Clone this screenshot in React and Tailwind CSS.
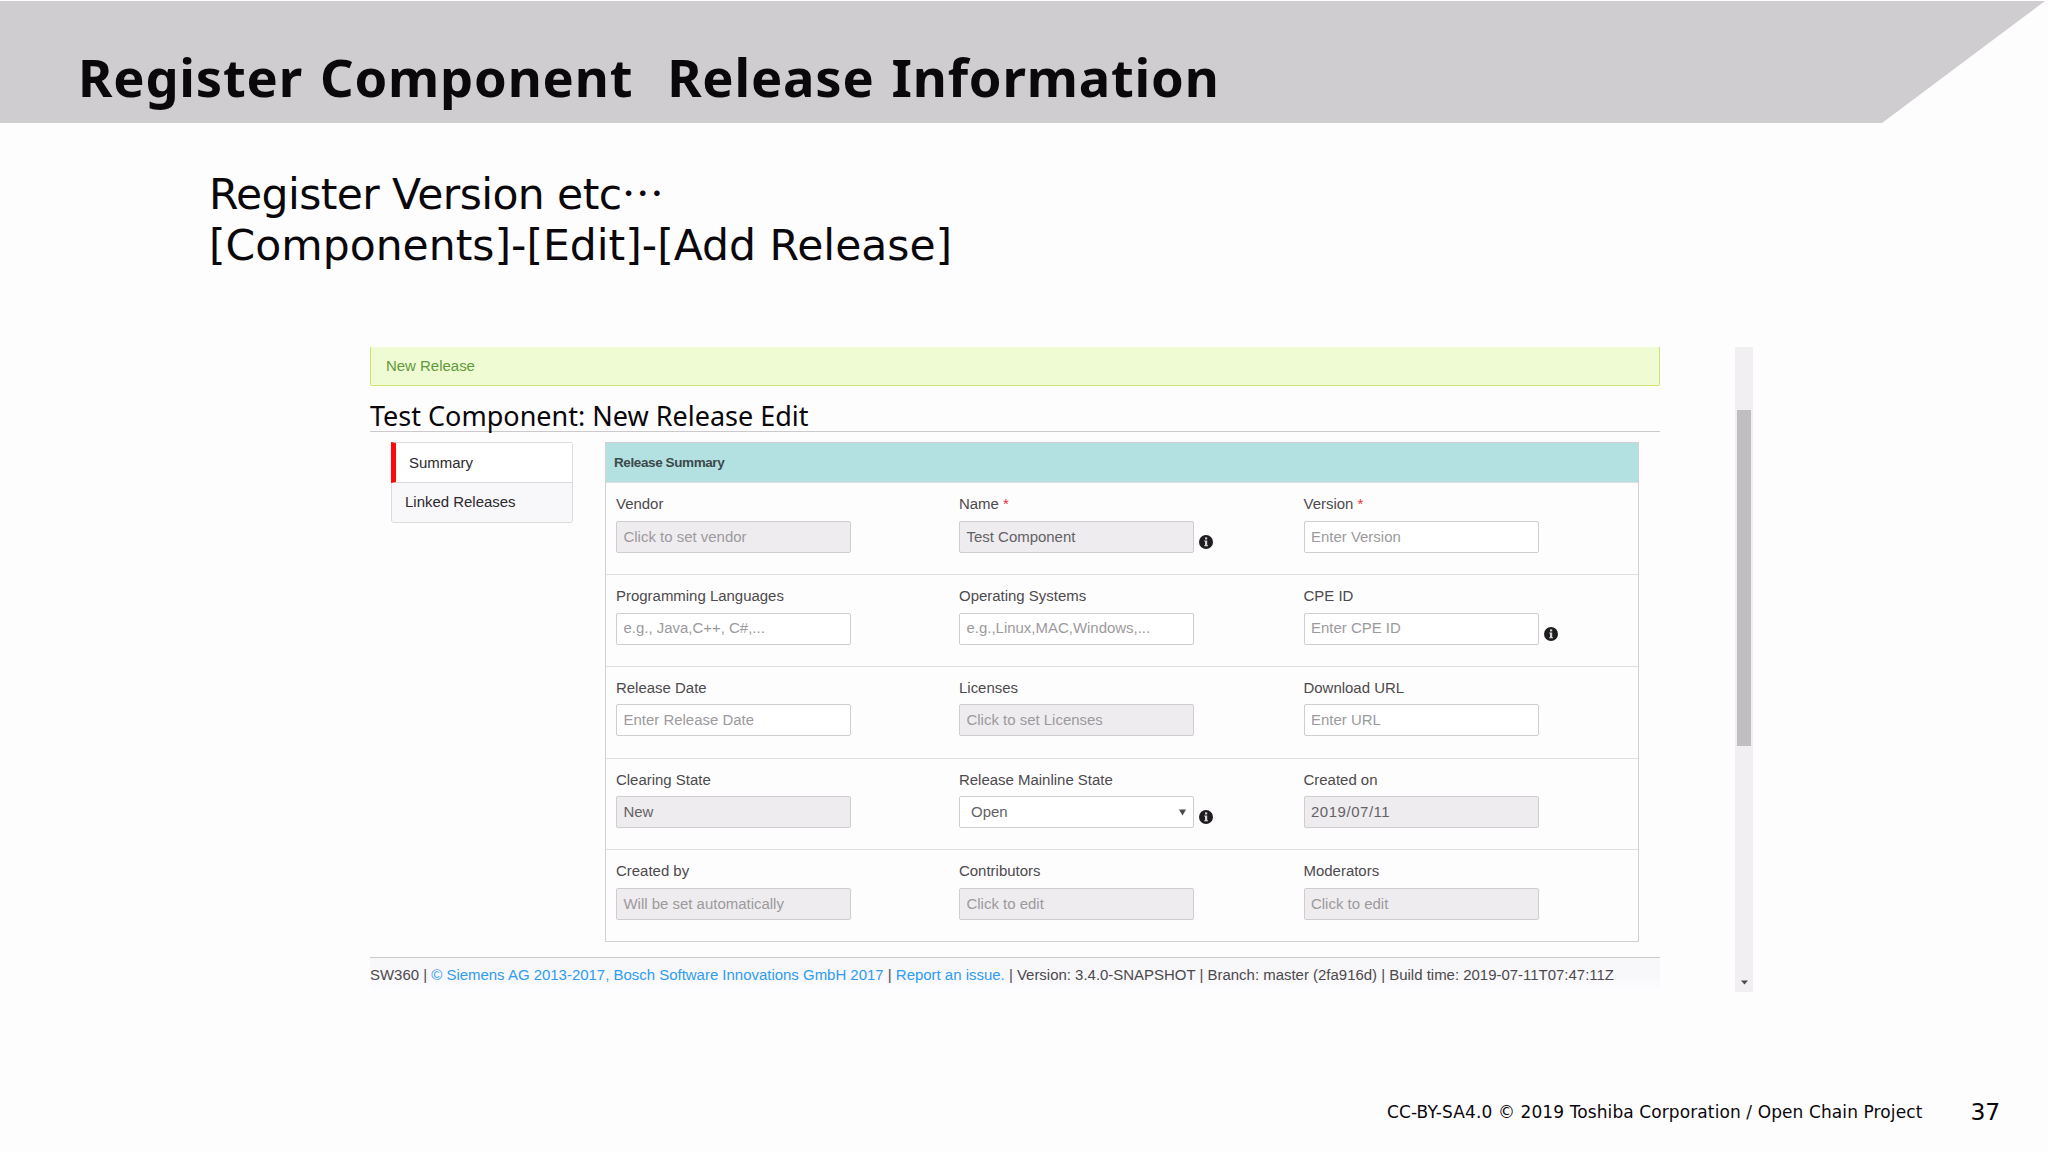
import React from "react";

const InfoIcon = () => (
  <svg width="14" height="14" viewBox="0 0 14 14" className="mt-[14px] ml-[5px] shrink-0">
    <circle cx="7" cy="7" r="7" fill="#1e1c1e" />
    <rect x="6" y="2.4" width="2.2" height="2" fill="#d6d4d6" />
    <path d="M5.2 5.4H8.2V10.2H9V11.2H5.2V10.2H6V6.4H5.2Z" fill="#d6d4d6" />
  </svg>
);

const rows = [
  [
    { label: "Vendor", text: "Click to set vendor", disabled: true },
    { label: "Name", required: true, text: "Test Component", filled: true, disabled: true, info: true },
    { label: "Version", required: true, text: "Enter Version" },
  ],
  [
    { label: "Programming Languages", text: "e.g., Java,C++, C#,..." },
    { label: "Operating Systems", text: "e.g.,Linux,MAC,Windows,..." },
    { label: "CPE ID", text: "Enter CPE ID", info: true },
  ],
  [
    { label: "Release Date", text: "Enter Release Date" },
    { label: "Licenses", text: "Click to set Licenses", disabled: true },
    { label: "Download URL", text: "Enter URL" },
  ],
  [
    { label: "Clearing State", text: "New", filled: true, disabled: true },
    { label: "Release Mainline State", text: "Open", filled: true, select: true, info: true },
    { label: "Created on", text: "2019/07/11", filled: true, disabled: true, wide: true },
  ],
  [
    { label: "Created by", text: "Will be set automatically", disabled: true },
    { label: "Contributors", text: "Click to edit", disabled: true },
    { label: "Moderators", text: "Click to edit", disabled: true },
  ],
];

const Field = ({ field }) => (
  <div className="pt-[11px]">
    <div className="h-[26.5px] leading-[20px] text-[#4c4a4d]">
      {field.label}
      {field.required && <span className="text-[#f0303c]"> *</span>}
    </div>
    <div className="flex">
      <div
        className={`flex h-[32px] w-[235px] items-center justify-between rounded-[2px] border border-[#cfcdd0] pr-[7px] ${
          field.select ? "pl-[11px]" : "pl-[6.5px]"
        } ${field.disabled ? "bg-[#eeecef]" : "bg-white"} ${
          field.filled ? "text-[#646266]" : "text-[#9c9a9d]"
        }`}
      >
        <span className={field.wide ? "tracking-[0.55px]" : ""}>{field.text}</span>
        {field.select && (
          <svg width="7" height="7" viewBox="0 0 7 7">
            <path d="M0 0.5H7L3.5 6.5Z" fill="#4c4a4d" />
          </svg>
        )}
      </div>
      {field.info && <InfoIcon />}
    </div>
  </div>
);

const App = () => {
  return (
    <div className="flex h-[1152px] w-[2048px] flex-col overflow-hidden bg-[#fefdfe] font-['Noto_Sans',sans-serif] text-[#0a080b]">
      <header className="mt-px h-[122px] w-[2045px] bg-[#d0cdd1] [clip-path:polygon(0_0,100%_0,1882px_100%,0_100%)]">
        <h1 className="pt-[40px] pl-[78px] text-[52.5px] leading-[72px] font-bold tracking-[0.8px] [word-spacing:2.5px] whitespace-pre">
          Register Component  Release Information
        </h1>
      </header>

      <div className="mt-[42px] ml-[209px] h-[182px] font-['DejaVu_Sans',sans-serif] text-[42.5px] leading-[51px]">
        <p>
          <span className="tracking-[-0.6px]">Register Version etc</span>
          <span lang="ja" className="font-['Noto_Sans_CJK_JP',sans-serif]">{"\u22ef"}</span>
        </p>
        <p>[Components]-[Edit]-[Add Release]</p>
      </div>

      <main className="ml-[370px] flex h-[645px] w-[1383px] justify-between font-['Liberation_Sans',sans-serif] text-[14.96px]">
        <div className="w-[1290px]">
          <div className="h-[39px] rounded-b-[2px] border border-t-0 border-[#cfe36f] bg-[#effbd3] pl-[15px] leading-[38px] text-[#5f9a3a]">
            New Release
          </div>
          <h2 className="mt-[9px] h-[37px] border-b border-[#cbc9cc] font-['Noto_Sans',sans-serif] text-[27px] leading-[41px]">
            Test Component: New Release Edit
          </h2>

          <div className="mt-[10px] flex">
            <nav className="ml-[21px] h-[81px] w-[182px] rounded-[3px] border border-[#dddbde] bg-[#f8f7fa] text-[#2c2a2d]">
              <div className="-mt-px -ml-px flex h-[41px] items-center border-t border-b border-l-[5px] border-t-[#dddbde] border-b-[#dddbde] border-l-[#fa0a0a] bg-white pt-[2px] pl-[13px]">
                Summary
              </div>
              <div className="flex h-[39px] items-center pl-[13px]">Linked Releases</div>
            </nav>

            <section className="ml-[32px] w-[1034px] border border-[#d2d0d3]">
              <div className="h-[39.3px] bg-[#b3e0e1] pl-[8px] text-[13.5px] leading-[39px] font-bold tracking-[-0.4px] text-[#3c4a4c]">
                Release Summary
              </div>
              {rows.map((row, i) => (
                <div
                  key={i}
                  className="grid h-[91.8px] grid-cols-[343px_344.5px_1fr] border-t border-[#e0dee1] pl-[10px]"
                >
                  {row.map((field) => (
                    <Field key={field.label} field={field} />
                  ))}
                </div>
              ))}
            </section>
          </div>

          <footer className="mt-[15px] h-[34px] border-t border-[#cbc9cc] bg-linear-to-b from-[#f8f7fa] from-60% to-[#fefdfe] leading-[33px] whitespace-pre text-[#4c4a4d]">
            SW360 |{" "}
            <span className="text-[#2e9df0]">© Siemens AG 2013-2017, Bosch Software Innovations GmbH 2017</span> |{" "}
            <span className="text-[#2e9df0]">Report an issue.</span>
            {" "}| Version: 3.4.0-SNAPSHOT | Branch: master (2fa916d) | Build time: 2019-07-11T07:47:11Z
          </footer>
        </div>

        <div className="flex w-[18px] flex-col items-center justify-between bg-[#f1eff2] pt-[63px] pb-[7px]">
          <div className="h-[336px] w-[14px] bg-[#c0bec1]" />
          <svg width="7" height="5" viewBox="0 0 7 5">
            <path d="M0 0.5H7L3.5 4.5Z" fill="#4c4a4d" />
          </svg>
        </div>
      </main>

      <div className="mt-[103px] flex items-start font-['DejaVu_Sans',sans-serif]">
        <span className="ml-[1387px] text-[17px] leading-[35px] tracking-[0.1px]">
          CC-BY-SA4.0 © 2019 Toshiba Corporation / Open Chain Project
        </span>
        <span className="ml-[48px] text-[23.5px] leading-[34px]">37</span>
      </div>
    </div>
  );
};

export default App;
